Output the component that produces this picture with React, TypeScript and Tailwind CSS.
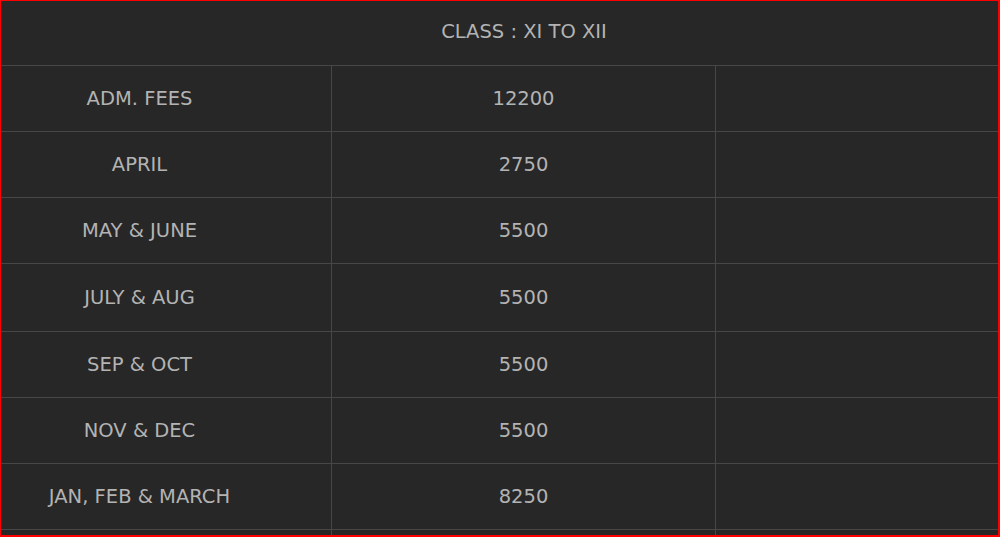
import React from "react";

const rows: [string, string][] = [
  ["ADM. FEES", "12200"],
  ["APRIL", "2750"],
  ["MAY & JUNE", "5500"],
  ["JULY & AUG", "5500"],
  ["SEP & OCT", "5500"],
  ["NOV & DEC", "5500"],
  ["JAN, FEB & MARCH", "8250"],
  ["", ""],
];

export default function App() {
  return (
    <div className="h-[537px] w-[1000px] overflow-hidden border-t border-l border-r-2 border-b-2 border-[#ff0000] bg-[#272727] font-['DejaVu_Sans',sans-serif] text-[19.5px] text-[#b3b3b3]">
      <div className="ml-[-53px] w-[1152px]">
        <div className="flex h-[65px] items-center justify-center border-b border-[#474747] pb-[2px]">
          CLASS : XI TO XII
        </div>
        {rows.map(([label, amount], i) => (
          <div
            key={i}
            className={`grid grid-cols-[384px_384px_384px] border-b border-[#474747] ${i === 3 ? "h-[68px]" : "h-[66px]"}`}
          >
            <div className="flex items-center justify-center border-r border-[#474747]">{label}</div>
            <div className="flex items-center justify-center border-r border-[#474747]">{amount}</div>
            <div />
          </div>
        ))}
      </div>
    </div>
  );
}
